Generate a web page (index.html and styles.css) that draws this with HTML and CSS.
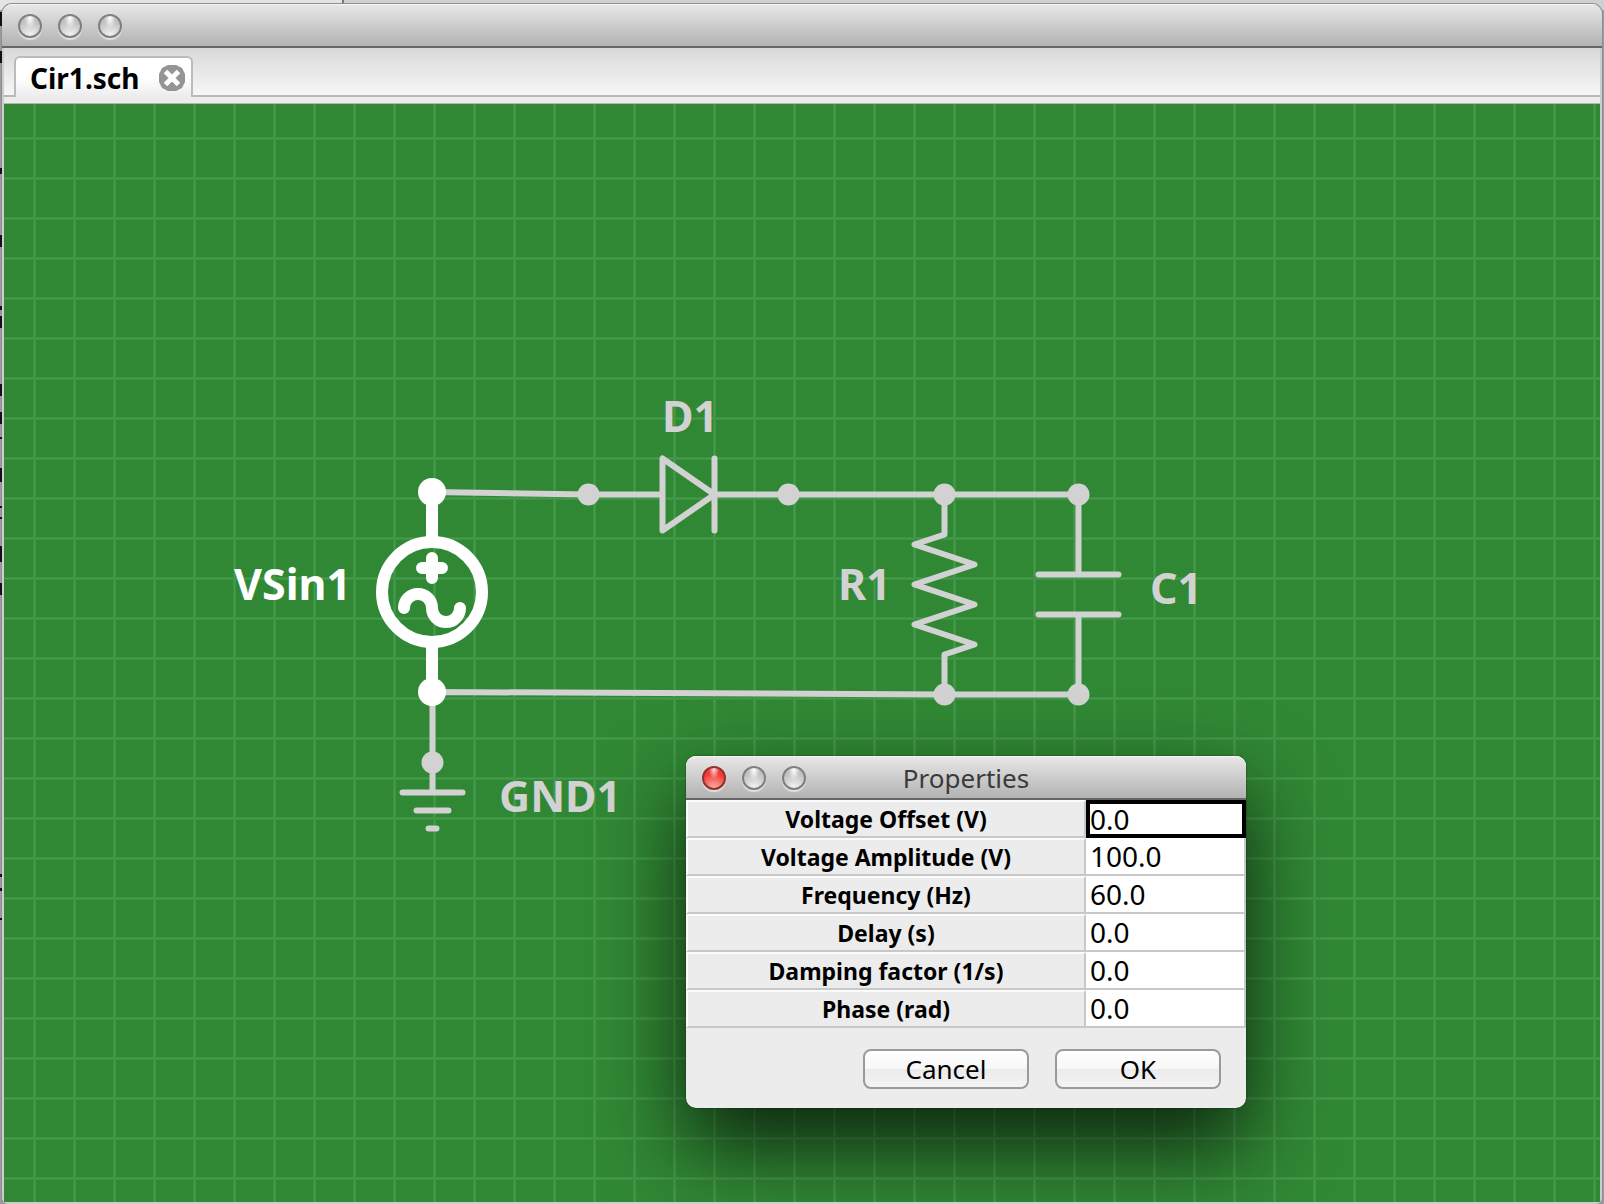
FILE: index.html
```html
<!DOCTYPE html>
<html lang="en">
<head>
<meta charset="utf-8">
<title>Cir1.sch</title>
<link rel="stylesheet" href="styles.css">
</head>
<body>
<svg class="backdrop-edge" aria-hidden="true">
  <path d="M1 12v14M1 51v12M1 168v6M1 235v12M1 306v4M1 316v12M1 384v12M1 412v12M1 437v2M1 468v14M1 506v2M1 517v2M1 546v16M1 583v12M1 874v3M1 888v3M1 918v2"/>
</svg>
<main class="window">
  <header class="titlebar">
    <button class="light" type="button" aria-label="Close window"></button>
    <button class="light" type="button" aria-label="Minimize window"></button>
    <button class="light" type="button" aria-label="Zoom window"></button>
  </header>
  <nav class="tabs" role="tablist">
    <div class="tab" role="tab" aria-selected="true">
      <span>Cir1.sch</span>
      <button class="tab-close" type="button" aria-label="Close tab">
        <svg width="26" height="26" viewBox="0 0 26 26">
          <path fill="#959595" d="M9 0h8l6 3 3 6v8l-3 6-6 3H9l-6-3-3-6V9l3-6z"/>
          <path stroke="#fff" stroke-width="5" d="M6.500 6.500l13 13M19.500 6.500l-13 13"/>
        </svg>
      </button>
    </div>
  </nav>
  <section class="canvas">
    <svg class="schematic" role="img" aria-label="Half-wave rectifier circuit">
      <g transform="translate(-4 -104)">
        <g class="wires">
          <path d="M432 492L588.5 494.5M432 692L944.5 694.5M432.5 692V762.5M788.5 494.5H1078.5M944.5 694.5H1078.5"/>
          <path d="M588.5 494.5H662.5M714.5 494.5H788.5M662.5 458.5V530.5L714.5 494.5ZM714.5 458.5V530.5"/>
          <path d="M944.5 494.5V534.5L914.5 544.5L974.5 564.5L914.5 584.5L974.5 604.5L914.5 624.5L974.5 644.5L944.5 654.5V694.5"/>
          <path d="M1078.5 494.5V574.5M1038.5 574.5H1118.5M1038.5 614.5H1118.5M1078.5 614.5V694.5"/>
          <path d="M432.5 762.5V792.5M402.5 792.5H462.5M416.5 810.5H448.5M428.5 828.5H436.5"/>
        </g>
        <g class="nodes">
          <circle cx="588.5" cy="494.5" r="11"/>
          <circle cx="788.5" cy="494.5" r="11"/>
          <circle cx="944.5" cy="494.5" r="11"/>
          <circle cx="1078.5" cy="494.5" r="11"/>
          <circle cx="944.5" cy="694.5" r="11"/>
          <circle cx="1078.5" cy="694.5" r="11"/>
          <circle cx="432.5" cy="762.5" r="11"/>
        </g>
        <g class="source">
          <path d="M432 492V542M432 642V692M422 568H442M432 558V578M404 608a14 14 0 0 1 28 0a14 14 0 0 0 28 0"/>
          <circle cx="432" cy="592" r="50"/>
        </g>
        <g class="source-nodes">
          <circle cx="432" cy="492" r="14"/>
          <circle cx="432" cy="692" r="14"/>
        </g>
        <g class="names">
          <text class="selected" x="234" y="600">VSin1</text>
          <text x="662" y="432">D1</text>
          <text x="838" y="600">R1</text>
          <text x="1150" y="604">C1</text>
          <text x="499" y="812">GND1</text>
        </g>
      </g>
    </svg>
    <form class="dialog" role="dialog" aria-labelledby="dialog-title">
      <header class="titlebar dialog-titlebar">
        <button class="light light-red" type="button" aria-label="Close"></button>
        <button class="light" type="button" aria-label="Minimize"></button>
        <button class="light" type="button" aria-label="Zoom"></button>
        <h1 id="dialog-title">Properties</h1>
      </header>
      <table class="properties">
        <tbody>
          <tr><th scope="row"><label for="offset">Voltage Offset (V)</label></th><td class="active"><input id="offset" type="text" value="0.0"></td></tr>
          <tr><th scope="row"><label for="amplitude">Voltage Amplitude (V)</label></th><td><input id="amplitude" type="text" value="100.0"></td></tr>
          <tr><th scope="row"><label for="frequency">Frequency (Hz)</label></th><td><input id="frequency" type="text" value="60.0"></td></tr>
          <tr><th scope="row"><label for="delay">Delay (s)</label></th><td><input id="delay" type="text" value="0.0"></td></tr>
          <tr><th scope="row"><label for="damping">Damping factor (1/s)</label></th><td><input id="damping" type="text" value="0.0"></td></tr>
          <tr><th scope="row"><label for="phase">Phase (rad)</label></th><td><input id="phase" type="text" value="0.0"></td></tr>
        </tbody>
      </table>
      <footer class="actions">
        <button class="push" type="button">Cancel</button>
        <button class="push" type="submit">OK</button>
      </footer>
    </form>
  </section>
</main>
</body>
</html>
```
FILE: styles.css
```css
* {
  box-sizing: border-box;
}

body {
  display: flex;
  min-height: 100vh;
  margin: 0;
  padding: 4px 2px 0;
  background: linear-gradient(90deg, #e4e4e4 342px, #777 342px 344px, #d0d0d0 344px) 0 0 / 100% 10px no-repeat, #9c9c9e;
  font-family: "Noto Sans", "Open Sans", sans-serif;
  font-size: 28px;
  color: #000;
}

button,
input {
  margin: 0;
  padding: 0;
  border: 0;
  font: inherit;
  color: inherit;
}

.backdrop-edge {
  position: absolute;
  left: 0;
  top: 0;
  width: 2px;
  height: 100%;
  stroke: #111;
  stroke-width: 2;
}

.window {
  display: flex;
  flex: 1;
  flex-direction: column;
  border-radius: 10px 10px 6px 6px;
  box-shadow: 0 0 0 1px #8e8e90;
  background: #cdcdcf;
  overflow: hidden;
}

.titlebar {
  display: flex;
  align-items: center;
  gap: 16px;
  height: 44px;
  padding: 2px 16px 0;
  border-bottom: 2px solid #666;
  box-shadow: inset 0 1px #f4f4f4;
  background: linear-gradient(#e8e8e8, #b2b2b2);
}

.light {
  width: 24px;
  height: 24px;
  border: 2px solid #808080;
  border-radius: 50%;
  box-shadow: 0 2px 1px #e2e2e2;
  background: radial-gradient(ellipse at 50% 10%, #fff 0, #fff0 40%), radial-gradient(circle at 50% 100%, #f4f4f4, #c0c0c0 70%);
}

.light-red {
  border-color: #94302e;
  background: radial-gradient(ellipse at 50% 8%, #fdd 0, #fdd0 36%), radial-gradient(circle at 50% 100%, #ffb0a8, #f23c38 66%);
}

.tabs {
  display: flex;
  height: 56px;
  margin: 0 2px;
  padding: 8px 10px 7px;
  border-bottom: 1px solid #b4b4b4;
  background: linear-gradient(#d8d8d8, #f7f7f7 47px, #b8b8b8 47px 49px, #ececec 49px);
}

.tab {
  display: flex;
  align-items: center;
  gap: 20px;
  height: 41px;
  padding: 0 6px 0 14px;
  border: 2px solid #bbb;
  border-bottom: 0;
  border-radius: 6px 6px 0 0;
  background: linear-gradient(#fff 50%, #ececec);
  font-weight: 700;
}

.tab-close {
  width: 26px;
  height: 26px;
  background: none;
}

.tab-close svg {
  display: block;
}

.canvas {
  position: relative;
  flex: 1;
  margin: 0 2px 2px;
  background:
    linear-gradient(90deg, #3c9341 1px, #47994d 1px 2px, #3c9341 2px 3px, #0000 3px) 29px 0 / 40px 40px,
    linear-gradient(#3c9341 1px, #47994d 1px 2px, #3c9341 2px 3px, #0000 3px) 0 33px / 40px 40px,
    #308834;
  overflow: hidden;
}

.schematic {
  position: absolute;
  inset: 0;
  width: 100%;
  height: 100%;
}

.wires,
.source {
  fill: none;
  stroke: #d2d2d2;
  stroke-width: 6;
  stroke-linecap: round;
  stroke-linejoin: round;
}

.source {
  stroke: #fff;
  stroke-width: 12;
}

.nodes,
.names {
  fill: #d2d2d2;
}

.source-nodes,
.selected {
  fill: #fff;
}

.names {
  font-size: 43px;
  font-weight: 700;
}

.dialog {
  position: absolute;
  left: 682px;
  top: 652px;
  width: 560px;
  border-radius: 10px;
  box-shadow: 0 0 2px #0008, 0 38px 84px #000b;
  background: #ececec;
}

.dialog-titlebar {
  position: relative;
  border-radius: 10px 10px 0 0;
}

.dialog-titlebar h1 {
  position: absolute;
  inset: 0;
  margin: 0;
  font-size: 26px;
  font-weight: 400;
  line-height: 44px;
  text-align: center;
  color: #3a3a3a;
  pointer-events: none;
}

.properties {
  width: 100%;
  table-layout: fixed;
  border-spacing: 0;
}

.properties th {
  width: 400px;
  height: 38px;
  padding: 0;
  border: 2px solid #c8c8c8;
  border-top-color: #fbfbfb;
  border-left-color: #fbfbfb;
  font-size: 23px;
  line-height: 30px;
}

.properties td {
  padding: 0;
  border: 2px solid #c8c8c8;
  border-width: 0 2px 2px 0;
  background: #fff;
}

.properties .active {
  border: 4px solid #000;
}

.properties input {
  display: block;
  width: 100%;
  height: 36px;
  padding-left: 4px;
  background: none;
  outline: none;
}

.properties .active input {
  height: 30px;
  padding-left: 0;
}

.actions {
  display: flex;
  justify-content: flex-end;
  gap: 26px;
  padding: 21px 25px 19px;
}

.push {
  width: 166px;
  height: 40px;
  border: 2px solid #9a9a9a;
  border-radius: 8px;
  background: linear-gradient(#fff, #f6f6f6 50%, #ebebeb 50%, #f4f4f4);
  font-size: 26px;
  line-height: 34px;
}
```
